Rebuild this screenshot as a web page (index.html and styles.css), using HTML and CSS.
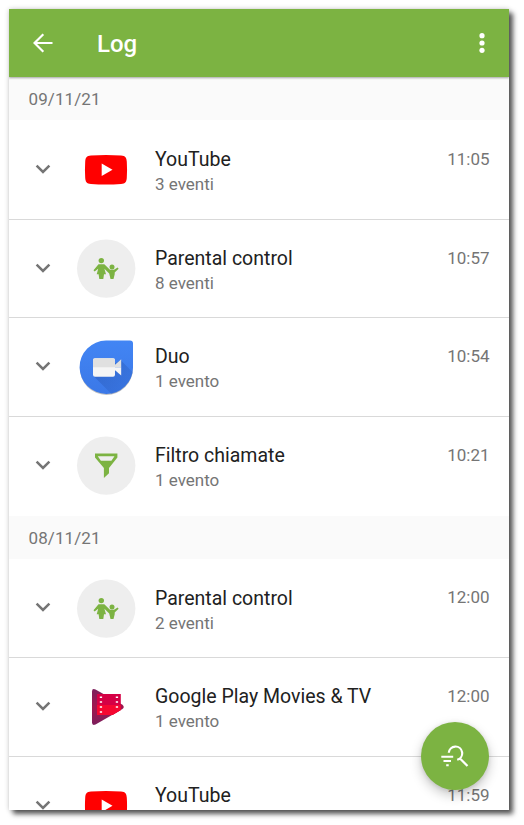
FILE: index.html
```html
<!DOCTYPE html>
<html lang="it">
<head>
<meta charset="utf-8">
<title>Log</title>
<link rel="stylesheet" href="styles.css">
</head>
<body>
<svg class="defs" width="0" height="0" aria-hidden="true">
  <defs>
    <linearGradient id="duo-blue" x1="0" y1="0" x2="0" y2="1"><stop offset="0" stop-color="#4285f4"/><stop offset="1" stop-color="#3b78e7"/></linearGradient>
    <linearGradient id="duo-shade" x1="0" y1="0" x2="1" y2="1"><stop offset="0" stop-color="#2a58b5" stop-opacity=".65"/><stop offset="1" stop-color="#3068ce" stop-opacity=".2"/></linearGradient>
    <linearGradient id="movie-back" x1="0" y1="0" x2="0" y2="1"><stop offset="0" stop-color="#7c1f5c"/><stop offset=".5" stop-color="#a0174f"/><stop offset="1" stop-color="#7c1f5c"/></linearGradient>
    <clipPath id="duo-clip"><path d="M30 2.500H54Q57 2.500 57 5.500V29.500A27 27 0 1 1 30 2.500Z"/></clipPath>
    <symbol id="chevron" viewBox="0 0 16 10"><path d="M1.600 1.700 8 8 14.400 1.700" fill="none" stroke="#757575" stroke-width="2.500"/></symbol>
    <symbol id="youtube" viewBox="0 0 60 60">
      <path d="M15 15.600Q30 14.400 45 15.600C49.500 15.900 50.500 17.800 50.800 21.800Q51.300 29.800 50.800 37.800C50.500 41.800 49.500 43.700 45 44Q30 45.200 15 44C10.500 43.700 9.500 41.800 9.200 37.800Q8.700 29.800 9.200 21.800C9.500 17.800 10.500 15.900 15 15.600Z" fill="#f00"/>
      <path d="M25.700 23.500 36.500 29.800 25.700 36.100Z" fill="#fff"/>
    </symbol>
    <symbol id="family" viewBox="0 0 60 60">
      <circle cx="30.200" cy="29.600" r="29.200" fill="#eee"/>
      <g fill="#7cb342">
        <circle cx="25.300" cy="21.600" r="2.700"/>
        <circle cx="36" cy="27.900" r="2.500"/>
        <path d="M22.500 25.200H28.300L34 30.800H38L41.700 28.500L42.600 29.700L38.700 33.500V35.300L37.500 40H34.500L33.200 34.500L28.400 29.800L30 35.300H28L27.300 40H23.300L22.600 35.300H20.700L22.200 29.800L18.600 32.500L17.500 31.200Z"/>
      </g>
    </symbol>
    <symbol id="duo" viewBox="0 0 60 60">
      <path d="M30.500 3.700H54Q57 3.700 57 6.700V30.500A26.600 26.600 0 1 1 30.500 3.700Z" fill="#777" opacity=".45"/>
      <path d="M30 2.500H54Q57 2.500 57 5.500V29.500A26.700 26.700 0 1 1 30 2.500Z" fill="url(#duo-blue)"/>
      <path clip-path="url(#duo-clip)" d="M18 38.500 44.500 22 60 37.500V60H39.500Z" fill="url(#duo-shade)"/>
      <rect x="17" y="20.200" width="22" height="18.500" rx="2" fill="#f5f5f5"/>
      <path d="M17 29.300V22.200Q17 20.200 19 20.200H37Q39 20.200 39 22.200V29.300Z" fill="#e0e0e0"/>
      <path d="M38.500 27.200 45.200 21.300V29.300H38.500Z" fill="#e0e0e0"/>
      <path d="M38.500 29.300H45.200V37.600L38.500 31.700Z" fill="#f5f5f5"/>
    </symbol>
    <symbol id="funnel" viewBox="0 0 60 60">
      <circle cx="30.200" cy="29.600" r="29.200" fill="#eee"/>
      <path fill-rule="evenodd" fill="#7cb342" d="M19 17.500H41.400V21.400L33 32V37.200L27.900 42V32L19 21.400ZM21.800 20.200 24.900 24.700H35.400L38.500 20.200Z"/>
    </symbol>
    <symbol id="movies" viewBox="0 0 60 60">
      <path d="M16 13.500Q16 10 19.500 11.500L46.500 26.700Q49 29 46.500 31.100L19.500 46.500Q16 48 16 44.500Z" fill="url(#movie-back)"/>
      <path d="M21 16H44.800V32.100L36.500 37H21Z" fill="#d50045"/>
      <path d="M21 27H44.800V32.100L36.500 37H21Z" fill="#f50731"/>
      <g fill="#fff"><path d="M23.800 18.400h2.300v1.600h-2.300zM23.800 23.200h2.300v1.600h-2.300zM23.800 28.200h2.300v1.600h-2.300zM23.800 33.200h2.300v1.600h-2.300zM39.800 18.400h2.300v1.600h-2.300zM39.800 23.200h2.300v1.600h-2.300zM39.800 28.200h2.300v1.600h-2.300z"/></g>
    </symbol>
  </defs>
</svg>
<main class="screen">
  <header class="bar">
    <svg class="back" viewBox="0 0 20 20"><path d="M19.500 10H2M10.300 1.200 1.500 10l8.800 8.800" fill="none" stroke="#fff" stroke-width="2.200"/></svg>
    <h1 class="title">Log</h1>
    <svg class="more" viewBox="0 0 6 20"><g fill="#fff"><circle cx="3" cy="2.700" r="2.600"/><circle cx="3" cy="10" r="2.600"/><circle cx="3" cy="17.300" r="2.600"/></g></svg>
  </header>
  <section class="day">
    <h2 class="date">09/11/21</h2>
    <article class="row"><svg class="chevron"><use href="#chevron"/></svg><svg class="icon"><use href="#youtube"/></svg><div class="text"><h3 class="name">YouTube</h3><p class="count">3 eventi</p></div><time class="time">11:05</time></article>
    <article class="row"><svg class="chevron"><use href="#chevron"/></svg><svg class="icon"><use href="#family"/></svg><div class="text"><h3 class="name">Parental control</h3><p class="count">8 eventi</p></div><time class="time">10:57</time></article>
    <article class="row"><svg class="chevron"><use href="#chevron"/></svg><svg class="icon"><use href="#duo"/></svg><div class="text"><h3 class="name">Duo</h3><p class="count">1 evento</p></div><time class="time">10:54</time></article>
    <article class="row"><svg class="chevron"><use href="#chevron"/></svg><svg class="icon"><use href="#funnel"/></svg><div class="text"><h3 class="name">Filtro chiamate</h3><p class="count">1 evento</p></div><time class="time">10:21</time></article>
  </section>
  <section class="day">
    <h2 class="date">08/11/21</h2>
    <article class="row"><svg class="chevron"><use href="#chevron"/></svg><svg class="icon"><use href="#family"/></svg><div class="text"><h3 class="name">Parental control</h3><p class="count">2 eventi</p></div><time class="time">12:00</time></article>
    <article class="row"><svg class="chevron"><use href="#chevron"/></svg><svg class="icon"><use href="#movies"/></svg><div class="text"><h3 class="name">Google Play Movies &amp; TV</h3><p class="count">1 evento</p></div><time class="time">12:00</time></article>
    <article class="row"><svg class="chevron"><use href="#chevron"/></svg><svg class="icon"><use href="#youtube"/></svg><div class="text"><h3 class="name">YouTube</h3></div><time class="time">11:59</time></article>
  </section>
  <button class="fab" aria-label="Cerca"><svg class="fab-icon" viewBox="0 0 28 24"><g fill="none" stroke="#fff" stroke-width="2.200"><path d="M7.800 8.800A6.700 6.700 0 1 1 16.200 15.700M18.500 14 26.500 22"/><path d="M.3 12.800H12.200M2.500 17H10M5.200 21.200H7.700" stroke-width="2"/></g></svg></button>
</main>
</body>
</html>
```
FILE: styles.css
```css
* { box-sizing: border-box; }
body { margin: 0; padding: 9px; background: #fff; font-family: Roboto, "Liberation Sans", sans-serif; }
.defs { position: absolute; }
h1, h2, h3, p { margin: 0; font-weight: 400; }
.screen {
  position: relative;
  width: 500px;
  height: 801px;
  overflow: hidden;
  background: #fff;
}
body::before {
  content: "";
  position: absolute;
  left: 9px;
  top: 9px;
  width: 500px;
  height: 801px;
  box-shadow: 4px 4px 5px rgba(0, 0, 0, .65), 0 0 5px rgba(0, 0, 0, .2);
}
.bar {
  position: relative;
  z-index: 1;
  display: flex;
  align-items: center;
  height: 68px;
  padding: 0 24px;
  background: #7cb342;
  box-shadow: 0 1px 2px rgba(0, 0, 0, .35);
}
.back { width: 20px; height: 20px; }
.title { margin: 2px 0 0 44px; color: #fff; font-size: 24px; font-weight: 500; line-height: 28px; }
.more { width: 6px; height: 20px; margin-left: auto; }
.date {
  height: 43.400px;
  padding-left: 19.500px;
  background: #fafafa;
  color: #757575;
  font-size: 17px;
  line-height: 45px;
  letter-spacing: .1px;
}
.day:first-of-type .date { line-height: 44px; }
.row {
  display: grid;
  grid-template-columns: 16px 60px 1fr auto;
  height: 98.600px;
  padding: 0 19.500px 0 26px;
  border-bottom: 1px solid #d9d9d9;
}
.date + .row { height: 99.200px; }
.row:last-child { border-bottom: 0; }
.day:first-of-type .row:last-child { height: 98.900px; }
.chevron { width: 16px; height: 10px; margin-top: 43.200px; }
.icon { width: 60px; height: 60px; margin: 19.500px 0 0 25px; }
.text { padding: 25px 0 0 44px; }
.date + .row .text { padding-top: 25.700px; }
.name { color: #212121; font-size: 19.500px; line-height: 28px; white-space: nowrap; }
.count { margin-top: -.8px; color: #757575; font-size: 17px; line-height: 22px; }
.time { padding-top: 27.200px; color: #757575; font-size: 17px; line-height: 22px; }
.fab {
  position: absolute;
  right: 20px;
  bottom: 20px;
  display: grid;
  place-items: center;
  width: 68px;
  height: 68px;
  padding: 0;
  border: 0;
  border-radius: 50%;
  background: #7cb342;
  box-shadow: 0 5px 12px rgba(0, 0, 0, .22), 0 1px 4px rgba(0, 0, 0, .1);
}
.fab-icon { width: 28px; height: 24px; }
```
